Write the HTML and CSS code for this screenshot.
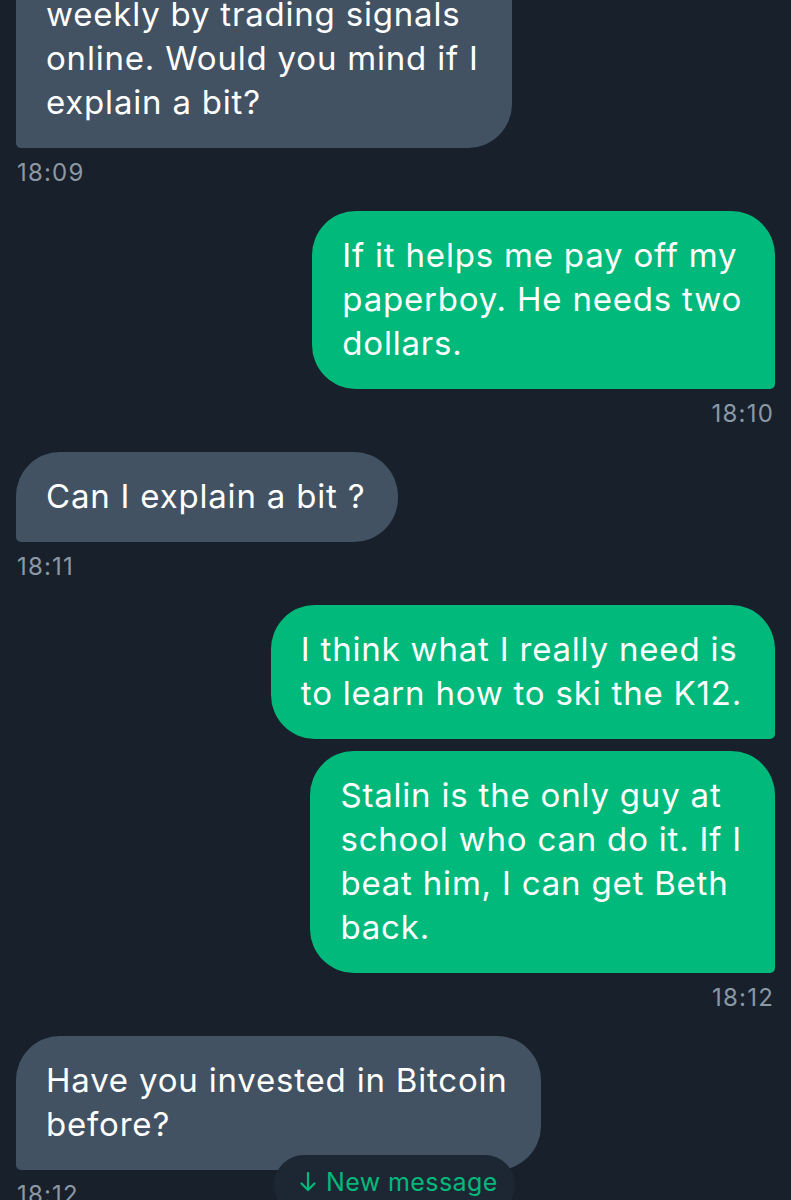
FILE: index.html
```html
<!DOCTYPE html>
<html lang="en">
<head>
<meta charset="utf-8">
<title>Messages</title>
<link rel="stylesheet" href="styles.css">
</head>
<body>
<div class="screen">
  <div class="chat">
    <div class="msg in">
      <div class="bubble">I am making money<br>weekly by trading signals<br>online. Would you mind if I<br>explain a bit?</div>
      <div class="time">18:09</div>
    </div>
    <div class="msg out">
      <div class="bubble">If it helps me pay off my<br>paperboy. He needs two<br>dollars.</div>
      <div class="time">18:10</div>
    </div>
    <div class="msg in">
      <div class="bubble">Can I explain a bit ?</div>
      <div class="time">18:11</div>
    </div>
    <div class="msg out">
      <div class="bubble">I think what I really need is<br>to learn how to ski the K12.</div>
      <div class="bubble">Stalin is the only guy at<br>school who can do it. If I<br>beat him, I can get Beth<br>back.</div>
      <div class="time">18:12</div>
    </div>
    <div class="msg in">
      <div class="bubble">Have you invested in Bitcoin<br>before?</div>
      <div class="time">18:12</div>
    </div>
  </div>
  <div class="new-pill">
    <svg class="arrow" width="16" height="20" viewBox="0 0 16 20" aria-hidden="true"><path d="M8 1v17M1.5 11.5L8 18l6.5-6.5" fill="none" stroke="currentColor" stroke-width="2.2" stroke-linecap="round" stroke-linejoin="round"/></svg>
    <span>New message</span>
  </div>
</div>
</body>
</html>
```
FILE: styles.css
```css
html, body {
  margin: 0;
  padding: 0;
  background: #18202b;
}
body {
  font-family: Inter, "Noto Sans", "Liberation Sans", sans-serif;
  color: #ffffff;
}
.screen {
  position: relative;
  width: 791px;
  height: 1200px;
  overflow: hidden;
}
.chat {
  display: flex;
  flex-direction: column;
  padding: 0 16px;
  margin-top: -74px;
}
.msg {
  display: flex;
  flex-direction: column;
  gap: 12px;
  margin-bottom: 25px;
}
.msg.in { align-items: flex-start; }
.msg.out { align-items: flex-end; }
.bubble {
  font-size: 33px;
  line-height: 44px;
  padding: 22px 33px 24px 30px;
  border-radius: 44px;
  letter-spacing: 0.8px;
}
.msg.in .bubble {
  background: #425262;
  border-bottom-left-radius: 5px;
}
.msg.out .bubble {
  background: #00b97b;
  border-bottom-right-radius: 5px;
}
.time {
  font-size: 24px;
  line-height: 26px;
  letter-spacing: 1.2px;
  color: #8b98a5;
  padding: 0 1px;
}
.new-pill {
  position: absolute;
  left: 274px;
  top: 1155px;
  width: 241px;
  height: 60px;
  border-radius: 30px;
  background: #1c2733;
  color: #00b97b;
  font-size: 25px;
  line-height: 28px;
  letter-spacing: 0.4px;
  padding: 13px 0 0 26px;
  box-sizing: border-box;
  display: flex;
  align-items: flex-start;
  gap: 10px;
}
.arrow {
  margin-top: 4px;
  flex: none;
}
```
